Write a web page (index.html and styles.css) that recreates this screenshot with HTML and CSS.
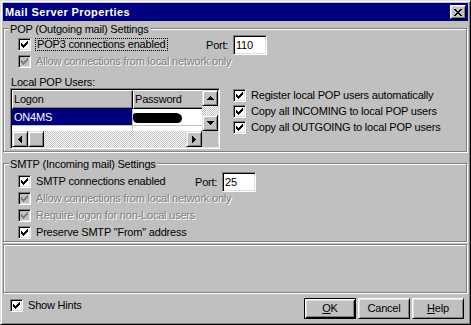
FILE: index.html
```html
<!DOCTYPE html>
<html lang="en">
<head>
<meta charset="UTF-8">
<title>Mail Server Properties</title>
<link rel="stylesheet" href="styles.css">
</head>
<body>

<svg class="defs" aria-hidden="true">
  <symbol id="tick" viewBox="0 0 7 7"><path d="M6 0h1v1H6zM5 1h2v1H5zM0 2h1v1H0zM4 2h3v1H4zM0 3h2v1H0zM3 3h3v1H3zM0 4h5v1H0zM1 5h3v1H1zM2 6h1v1H2z"/></symbol>
  <symbol id="up" viewBox="0 0 7 4"><path d="M3 0h1v1H3zM2 1h3v1H2zM1 2h5v1H1zM0 3h7v1H0z"/></symbol>
  <symbol id="down" viewBox="0 0 7 4"><path d="M0 0h7v1H0zM1 1h5v1H1zM2 2h3v1H2zM3 3h1v1H3z"/></symbol>
  <symbol id="left" viewBox="0 0 4 7"><path d="M3 0h1v7H3zM2 1h1v5H2zM1 2h1v3H1zM0 3h1v1H0z"/></symbol>
  <symbol id="right" viewBox="0 0 4 7"><path d="M0 0h1v7H0zM1 1h1v5H1zM2 2h1v3H2zM3 3h1v1H3z"/></symbol>
</svg>

<div class="window">
  <div class="titlebar">
    <span class="title">Mail Server Properties</span>
    <span class="close">
      <svg width="8" height="7" viewBox="0 0 8 7"><path d="M0 0h2v1H0zM6 0h2v1H6zM1 1h2v1H1zM5 1h2v1H5zM2 2h4v1H2zM3 3h2v1H3zM2 4h4v1H2zM1 5h2v1H1zM5 5h2v1H5zM0 6h2v1H0zM6 6h2v1H6z"/></svg>
    </span>
  </div>

  <!-- POP group -->
  <div class="etched group pop">
    <div class="caption">POP (Outgoing mail) Settings</div>
    <div class="row first">
      <div class="check-field pop-port">
        <span class="box"><svg class="mark"><use href="#tick"/></svg></span>
        <span class="label focus">POP3 connections enabled</span>
      </div>
      <span class="port">Port:</span>
      <span class="edit">110</span>
    </div>
    <div class="row disabled">
      <span class="box"><svg class="mark"><use href="#tick"/></svg></span>
      <span class="label">Allow connections from local network only</span>
    </div>

    <div class="users">
      <div class="users-left">
        <div class="users-title">Local POP Users:</div>
        <div class="listview">
          <div class="lv-body">
            <div class="lv-head">
              <span class="hcell col-logon">Logon</span>
              <span class="hcell col-pass">Password</span>
            </div>
            <div class="lv-row">
              <span class="cell col-logon selected">ON4MS</span>
              <span class="cell col-pass"><span class="blot"></span></span>
            </div>
            <div class="lv-row">
              <span class="cell col-logon"></span>
              <span class="cell col-pass"></span>
            </div>
          </div>
          <div class="vscroll">
            <span class="sbtn"><svg class="arrow-v"><use href="#up"/></svg></span>
            <span class="track"></span>
            <span class="sbtn"><svg class="arrow-v"><use href="#down"/></svg></span>
          </div>
          <div class="hscroll">
            <span class="sbtn"><svg class="arrow-h"><use href="#left"/></svg></span>
            <span class="sbtn"></span>
            <span class="track"></span>
            <span class="sbtn"><svg class="arrow-h"><use href="#right"/></svg></span>
          </div>
          <div class="corner"></div>
        </div>
      </div>

      <div class="users-right">
        <div class="row">
          <span class="box"><svg class="mark"><use href="#tick"/></svg></span>
          <span class="label">Register local POP users automatically</span>
        </div>
        <div class="row">
          <span class="box"><svg class="mark"><use href="#tick"/></svg></span>
          <span class="label">Copy all INCOMING to local POP users</span>
        </div>
        <div class="row">
          <span class="box"><svg class="mark"><use href="#tick"/></svg></span>
          <span class="label">Copy all OUTGOING to local POP users</span>
        </div>
      </div>
    </div>
  </div>

  <!-- SMTP group -->
  <div class="etched group smtp">
    <div class="caption">SMTP (Incoming mail) Settings</div>
    <div class="row">
      <div class="check-field smtp-port">
        <span class="box"><svg class="mark"><use href="#tick"/></svg></span>
        <span class="label">SMTP connections enabled</span>
      </div>
      <span class="port">Port:</span>
      <span class="edit">25</span>
    </div>
    <div class="row disabled">
      <span class="box"><svg class="mark"><use href="#tick"/></svg></span>
      <span class="label">Allow connections from local network only</span>
    </div>
    <div class="row disabled">
      <span class="box"><svg class="mark"><use href="#tick"/></svg></span>
      <span class="label">Require logon for non-Local users</span>
    </div>
    <div class="row">
      <span class="box"><svg class="mark"><use href="#tick"/></svg></span>
      <span class="label">Preserve SMTP &quot;From&quot; address</span>
    </div>
  </div>

  <div class="etched hints"></div>

  <div class="footer">
    <div class="row hint-row">
      <span class="box"><svg class="mark"><use href="#tick"/></svg></span>
      <span class="label">Show Hints</span>
    </div>
    <div class="buttons">
      <button class="btn default"><u>O</u>K</button>
      <button class="btn">Cancel</button>
      <button class="btn"><u>H</u>elp</button>
    </div>
  </div>
</div>

</body>
</html>
```

FILE: styles.css
```css
body {
  margin: 0;
  background: #c0c0c0;
  font-family: "Liberation Sans", Arial, sans-serif;
  font-size: 11px;
  letter-spacing: -0.2px;
  color: #000;
}

.defs {
  display: block;
  width: 0;
  height: 0;
}

.window {
  width: 471px;
  height: 325px;
  box-sizing: border-box;
  padding: 2px;
  border: 1px solid;
  border-color: #dfdfdf #000 #000 #dfdfdf;
  box-shadow: inset 1px 1px #fff, inset -1px -1px #808080;
  background: #c0c0c0;
  overflow: hidden;
}

/* title bar */
.titlebar {
  display: flex;
  align-items: center;
  height: 18px;
  padding: 0 2px;
  background: #000080;
  color: #fff;
}
.title {
  font-weight: bold;
  letter-spacing: 0.4px;
  line-height: 13px;
}
.close {
  display: flex;
  align-items: center;
  justify-content: center;
  width: 16px;
  height: 14px;
  box-sizing: border-box;
  margin-left: auto;
  border: 1px solid;
  border-color: #fff #000 #000 #fff;
  box-shadow: inset 1px 1px #dfdfdf, inset -1px -1px #808080;
  background: #c0c0c0;
  fill: #000;
}

/* etched frames */
.etched {
  width: 464px;
  box-sizing: border-box;
  border: 1px solid #808080;
  box-shadow: 1px 1px 0 #fff, inset 1px 1px 0 #fff;
}
.pop {
  margin-top: 7px;
  height: 124px;
}
.smtp {
  margin-top: 11px;
  height: 79px;
}
.hints {
  margin-top: 2px;
  height: 49px;
}
.caption {
  width: fit-content;
  margin: -6px 0 0 5px;
  padding: 0 1px;
  line-height: 13px;
  background: #c0c0c0;
}

/* checkbox rows */
.row {
  display: flex;
  align-items: center;
  height: 13px;
  margin: 4px 0 0 14px;
}
.row.first {
  margin-top: 2px;
}
.check-field {
  display: flex;
  align-items: center;
  flex: none;
}
.pop-port {
  width: 188px;
}
.smtp-port {
  width: 177px;
}
.box {
  display: flex;
  align-items: center;
  justify-content: center;
  flex: none;
  width: 13px;
  height: 13px;
  box-sizing: border-box;
  border: 1px solid;
  border-color: #808080 #fff #fff #808080;
  box-shadow: inset 1px 1px #000, inset -1px -1px #dfdfdf;
  background: #fff;
  color: #000;
}
.mark {
  width: 7px;
  height: 7px;
  fill: currentColor;
}
.label {
  margin-left: 5px;
  line-height: 13px;
  white-space: nowrap;
}
.label.focus {
  margin-left: 4px;
  padding: 0 1px;
  border: 1px dotted #000;
  line-height: 11px;
}
.disabled .box {
  background: #c0c0c0;
  color: #808080;
}
.disabled .label {
  color: #808080;
  text-shadow: 1px 1px 0 #fff;
}

.port {
  width: 27px;
  flex: none;
}
.edit {
  flex: none;
  width: 34px;
  height: 20px;
  box-sizing: border-box;
  padding: 0 2px;
  border: 1px solid;
  border-color: #808080 #fff #fff #808080;
  box-shadow: inset 1px 1px #000, inset -1px -1px #dfdfdf;
  background: #fff;
  line-height: 18px;
}

/* local users */
.users {
  display: flex;
  margin: 9px 0 0 6px;
}
.users-title {
  padding-left: 1px;
  line-height: 11px;
}
.users-right {
  margin-left: 13px;
  padding-top: 12px;
}
.users-right .row {
  margin: 3px 0 0 0;
}
.users-right .row:first-child {
  margin-top: 0;
}

.listview {
  display: grid;
  grid-template-columns: 190px 16px;
  grid-template-rows: 41px 16px;
  width: 210px;
  height: 61px;
  box-sizing: border-box;
  padding: 1px;
  border: 1px solid;
  border-color: #808080 #fff #fff #808080;
  box-shadow: inset 1px 1px #000, inset -1px -1px #dfdfdf;
  background: #fff;
}
.lv-body {
  overflow: hidden;
  background: #fff;
}
.lv-head,
.lv-row {
  display: flex;
}
.hcell {
  flex: none;
  height: 19px;
  box-sizing: border-box;
  padding-left: 1px;
  border: 1px solid;
  border-color: #fff #000 #000 #fff;
  box-shadow: inset -1px -1px #808080;
  background: #c0c0c0;
  line-height: 17px;
}
.col-logon {
  width: 121px;
}
.col-pass {
  width: 80px;
}
.cell {
  flex: none;
  height: 17px;
  box-sizing: border-box;
  padding: 1px 0 0 2px;
  border-bottom: 1px solid #c0c0c0;
  line-height: 15px;
}
.cell.col-logon {
  border-right: 1px solid #c0c0c0;
}
.cell.col-pass {
  padding-left: 0;
}
.selected {
  background: #000080;
  color: #fff;
}
.blot {
  display: block;
  width: 49px;
  height: 10px;
  margin-top: 3px;
  border-radius: 3px 6px 5px 5px;
  background: #000;
}

.vscroll {
  display: flex;
  flex-direction: column;
}
.hscroll {
  display: flex;
}
.sbtn {
  display: flex;
  align-items: center;
  justify-content: center;
  flex: none;
  width: 16px;
  height: 16px;
  box-sizing: border-box;
  border: 1px solid;
  border-color: #dfdfdf #000 #000 #dfdfdf;
  box-shadow: inset 1px 1px #fff, inset -1px -1px #808080;
  background: #c0c0c0;
  fill: #000;
}
.track {
  flex: 1;
  background: repeating-conic-gradient(#c0c0c0 0 25%, #fff 0 50%) 0 0 / 2px 2px;
}
.arrow-v {
  width: 7px;
  height: 4px;
}
.arrow-h {
  width: 4px;
  height: 7px;
}
.corner {
  background: #c0c0c0;
}

/* footer */
.footer {
  display: flex;
  align-items: flex-start;
  padding: 5px 4px 0 7px;
}
.hint-row {
  margin: 1px 0 0 0;
}
.buttons {
  display: flex;
  gap: 2px;
  margin-left: auto;
}
.btn {
  width: 52px;
  height: 21px;
  box-sizing: border-box;
  padding: 0;
  border: 1px solid;
  border-color: #fff #000 #000 #fff;
  box-shadow: inset 1px 1px #dfdfdf, inset -1px -1px #808080;
  background: #c0c0c0;
  font: inherit;
  letter-spacing: inherit;
  color: #000;
  line-height: 19px;
  text-align: center;
}
.btn.default {
  border-color: #000;
  box-shadow: inset 1px 1px #fff, inset -1px -1px #000, inset 2px 2px #dfdfdf, inset -2px -2px #808080;
}
```
